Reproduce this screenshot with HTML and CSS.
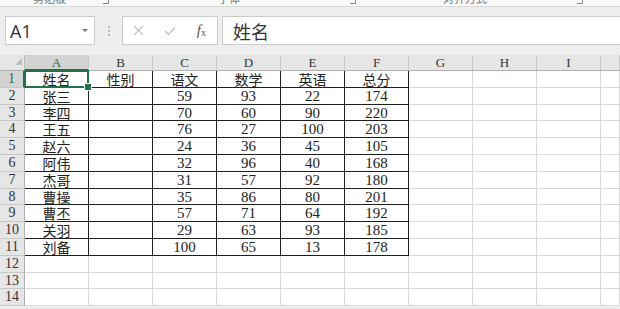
FILE: index.html
```html
<!DOCTYPE html>
<html lang="zh-CN">
<head>
    <meta charset="UTF-8">
    <title>成绩表</title>
    <link rel="stylesheet" href="styles.css">
</head>
<body>
    <div class="ribbon">
        <span class="rb-text rb-clip">剪贴板</span>
        <span class="rb-launch rb-l1"></span>
        <span class="rb-text rb-font">字体</span>
        <span class="rb-launch rb-l2"></span>
        <span class="rb-text rb-align">对齐方式</span>
        <span class="rb-launch rb-l3"></span>
    </div>

    <div class="fbar">
        <div class="namebox">
            <span>A1</span>
            <span class="namebox__arrow"></span>
        </div>
        <div class="grip">
            <svg width="2" height="10" viewBox="0 0 2 10"><rect x="0" y="0" width="2" height="2" fill="#bbb"/><rect x="0" y="4" width="2" height="2" fill="#bbb"/><rect x="0" y="8" width="2" height="2" fill="#bbb"/></svg>
        </div>
        <div class="fx-group">
            <span class="fx-btn">
                <svg width="11" height="11" viewBox="0 0 11 11"><path d="M1 1 L10 10 M10 1 L1 10" stroke="#c4c4c4" stroke-width="1.3" fill="none"/></svg>
            </span>
            <span class="fx-btn">
                <svg width="12" height="10" viewBox="0 0 12 10"><path d="M1 5 L4.5 8.5 L11 1.5" stroke="#c4c4c4" stroke-width="1.5" fill="none"/></svg>
            </span>
            <span class="fx-btn fx-btn--fx"><i>f</i><small>x</small></span>
        </div>
        <div class="finput">姓名</div>
    </div>

    <div class="sheet">
        <div class="corner"><svg width="25" height="16" viewBox="0 0 25 16"><polygon points="22,3 22,10 15,10" fill="#bdbdbd"/></svg></div>
        <div class="ch on">A</div><div class="ch">B</div><div class="ch">C</div><div class="ch">D</div><div class="ch">E</div><div class="ch">F</div><div class="ch">G</div><div class="ch">H</div><div class="ch">I</div><div class="ch"></div>

        <div class="rh on">1</div>
        <div class="c t sel">姓名</div><div class="c t">性别</div><div class="c t">语文</div><div class="c t">数学</div><div class="c t">英语</div><div class="c t">总分</div>
        <div class="c"></div><div class="c"></div><div class="c"></div><div class="c"></div>

        <div class="rh">2</div>
        <div class="c t">张三</div><div class="c t"></div><div class="c t n">59</div><div class="c t n">93</div><div class="c t n">22</div><div class="c t n">174</div>
        <div class="c"></div><div class="c"></div><div class="c"></div><div class="c"></div>

        <div class="rh">3</div>
        <div class="c t">李四</div><div class="c t"></div><div class="c t n">70</div><div class="c t n">60</div><div class="c t n">90</div><div class="c t n">220</div>
        <div class="c"></div><div class="c"></div><div class="c"></div><div class="c"></div>

        <div class="rh">4</div>
        <div class="c t">王五</div><div class="c t"></div><div class="c t n">76</div><div class="c t n">27</div><div class="c t n">100</div><div class="c t n">203</div>
        <div class="c"></div><div class="c"></div><div class="c"></div><div class="c"></div>

        <div class="rh">5</div>
        <div class="c t">赵六</div><div class="c t"></div><div class="c t n">24</div><div class="c t n">36</div><div class="c t n">45</div><div class="c t n">105</div>
        <div class="c"></div><div class="c"></div><div class="c"></div><div class="c"></div>

        <div class="rh">6</div>
        <div class="c t">阿伟</div><div class="c t"></div><div class="c t n">32</div><div class="c t n">96</div><div class="c t n">40</div><div class="c t n">168</div>
        <div class="c"></div><div class="c"></div><div class="c"></div><div class="c"></div>

        <div class="rh">7</div>
        <div class="c t">杰哥</div><div class="c t"></div><div class="c t n">31</div><div class="c t n">57</div><div class="c t n">92</div><div class="c t n">180</div>
        <div class="c"></div><div class="c"></div><div class="c"></div><div class="c"></div>

        <div class="rh">8</div>
        <div class="c t">曹操</div><div class="c t"></div><div class="c t n">35</div><div class="c t n">86</div><div class="c t n">80</div><div class="c t n">201</div>
        <div class="c"></div><div class="c"></div><div class="c"></div><div class="c"></div>

        <div class="rh">9</div>
        <div class="c t">曹丕</div><div class="c t"></div><div class="c t n">57</div><div class="c t n">71</div><div class="c t n">64</div><div class="c t n">192</div>
        <div class="c"></div><div class="c"></div><div class="c"></div><div class="c"></div>

        <div class="rh">10</div>
        <div class="c t">关羽</div><div class="c t"></div><div class="c t n">29</div><div class="c t n">63</div><div class="c t n">93</div><div class="c t n">185</div>
        <div class="c"></div><div class="c"></div><div class="c"></div><div class="c"></div>

        <div class="rh">11</div>
        <div class="c t">刘备</div><div class="c t"></div><div class="c t n">100</div><div class="c t n">65</div><div class="c t n">13</div><div class="c t n">178</div>
        <div class="c"></div><div class="c"></div><div class="c"></div><div class="c"></div>

        <div class="rh">12</div>
        <div class="c"></div><div class="c"></div><div class="c"></div><div class="c"></div><div class="c"></div><div class="c"></div><div class="c"></div><div class="c"></div><div class="c"></div><div class="c"></div>

        <div class="rh">13</div>
        <div class="c"></div><div class="c"></div><div class="c"></div><div class="c"></div><div class="c"></div><div class="c"></div><div class="c"></div><div class="c"></div><div class="c"></div><div class="c"></div>

        <div class="rh">14</div>
        <div class="c"></div><div class="c"></div><div class="c"></div><div class="c"></div><div class="c"></div><div class="c"></div><div class="c"></div><div class="c"></div><div class="c"></div><div class="c"></div>
    </div>
</body>
</html>
```

FILE: styles.css
```css
* {
    box-sizing: border-box;
}

body {
    margin: 0;
    width: 620px;
    height: 309px;
    overflow: hidden;
    background: #eeeeee;
    font-family: "Noto Sans CJK SC", sans-serif;
    color: #222;
}

/* bottom edge of the ribbon, cut off */
.ribbon {
    display: flex;
    align-items: flex-start;
    height: 7px;
    overflow: hidden;
    background: #f9f9f9;
    border-bottom: 1px solid #d9d9d9;
}

.rb-text {
    font-size: 11px;
    line-height: 11px;
    margin-top: -7px;
    color: #777;
    white-space: nowrap;
}

.rb-launch {
    width: 6px;
    height: 4px;
    border-right: 1px solid #888;
    border-bottom: 1px solid #888;
}

.rb-clip { margin-left: 33px; }
.rb-l1 { margin-left: 37px; }
.rb-font { margin-left: 109px; }
.rb-l2 { margin-left: 110px; }
.rb-align { margin-left: 87px; }
.rb-l3 { margin-left: 90px; }

/* formula bar */
.fbar {
    display: flex;
    height: 29px;
    margin: 9px 0 10px 5px;
}

.namebox {
    width: 90px;
    display: flex;
    align-items: center;
    justify-content: space-between;
    padding: 0 6px 0 4px;
    background: #fff;
    border: 1px solid #cbcbcb;
    font-family: "Open Sans", sans-serif;
    font-size: 18px;
    color: #333;
}

.namebox__arrow {
    width: 0;
    height: 0;
    border-left: 3px solid transparent;
    border-right: 3px solid transparent;
    border-top: 3px solid #7a7a7a;
}

.grip {
    width: 27px;
    display: flex;
    align-items: center;
    justify-content: center;
}

.fx-group {
    width: 96px;
    display: flex;
    background: #fff;
    border: 1px solid #cbcbcb;
}

.fx-btn {
    flex: 1;
    display: flex;
    align-items: center;
    justify-content: center;
}

.fx-btn--fx {
    font-family: "Liberation Serif", serif;
    color: #555;
    font-size: 15px;
}

.fx-btn--fx small {
    font-size: 10px;
    margin-top: 4px;
}

.finput {
    flex: 1;
    margin: 0 -6px 0 4px;
    display: flex;
    align-items: center;
    padding-left: 10px;
    background: #fff;
    border: 1px solid #cbcbcb;
    font-size: 18px;
    color: #333;
}

/* worksheet */
.sheet {
    display: grid;
    grid-template-columns: 25px repeat(9, 64px) 1fr;
    grid-template-rows: 16px repeat(14, 16.8px);
    background: #fff;
}

.corner {
    background: #e6e6e6;
    border-right: 1px solid #bcbcbc;
    border-bottom: 1px solid #b0b0b0;
}

.corner svg {
    display: block;
}

.ch {
    background: #e6e6e6;
    border-right: 1px solid #c8c8c8;
    border-bottom: 1px solid #b0b0b0;
    font-family: "Liberation Serif", serif;
    font-size: 13px;
    line-height: 15px;
    text-align: center;
    color: #333;
}

.ch.on {
    background: #d3d3d3;
    color: #217346;
    border-bottom: 2px solid #217346;
}

.rh {
    background: #e6e6e6;
    border-right: 1px solid #b0b0b0;
    border-bottom: 1px solid #c8c8c8;
    font-family: "Liberation Serif", serif;
    font-size: 14px;
    line-height: 16px;
    text-align: center;
    color: #333;
}

.rh.on {
    background: #d3d3d3;
    color: #217346;
    border-right: 2px solid #217346;
}

.c {
    border-right: 1px solid #d8d8d8;
    border-bottom: 1px solid #d8d8d8;
    font-size: 14px;
    line-height: 16px;
    text-align: center;
    white-space: nowrap;
}

.c.t {
    border-color: #1e1e1e;
}

.c.n {
    font-family: "Liberation Serif", serif;
    font-size: 15px;
}

/* active cell */
.sel {
    position: relative;
}

.sel::after {
    content: "";
    position: absolute;
    left: -1px;
    top: -1px;
    right: -1px;
    bottom: -1px;
    border: 2px solid #217346;
    z-index: 2;
}

.sel::before {
    content: "";
    position: absolute;
    right: -4px;
    bottom: -4px;
    width: 6px;
    height: 6px;
    background: #217346;
    border: 1px solid #fff;
    z-index: 3;
}
```
